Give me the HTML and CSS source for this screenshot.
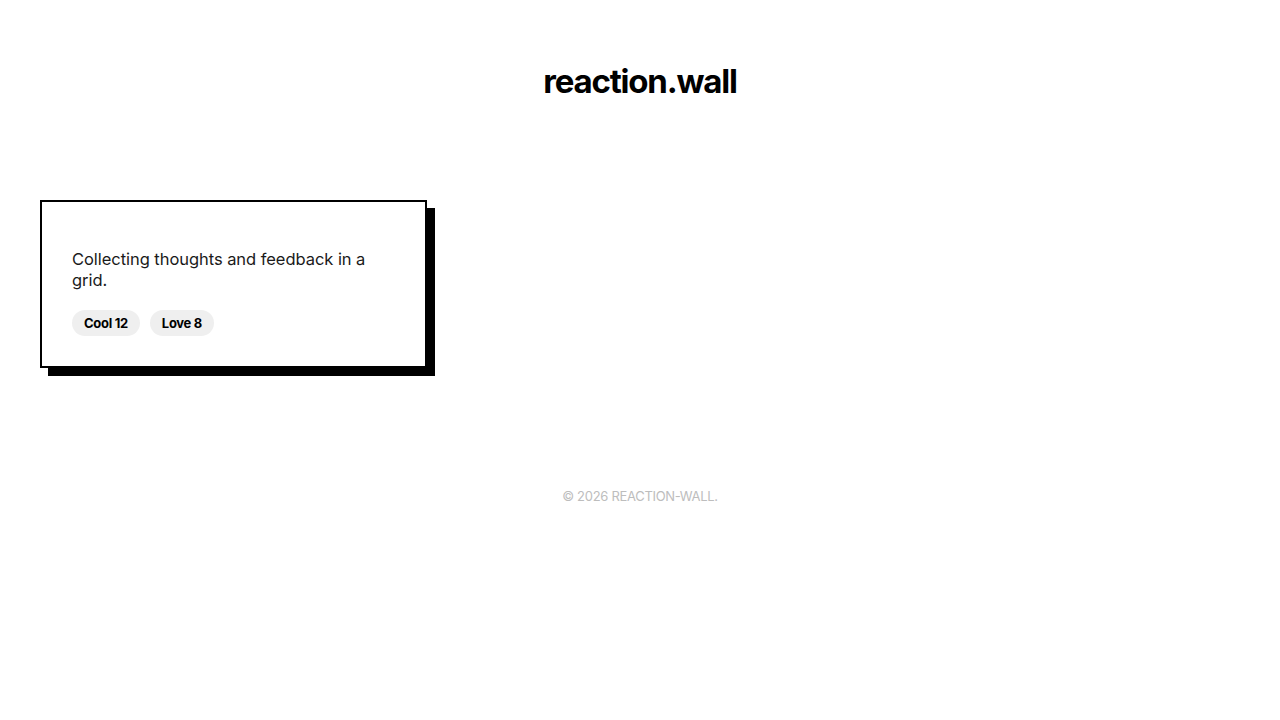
FILE: index.html
```html
<!DOCTYPE html>
<html>
<head>
<meta charset="utf-8">
<link rel="stylesheet" href="styles.css">
</head>
<body>
<header class="header">
  <h1 class="logo">reaction.wall</h1>
</header>
<main class="grid">
  <article class="card">
    <p class="card-text">Collecting thoughts and feedback in a grid.</p>
    <div class="reactions">
      <span class="pill">Cool 12</span>
      <span class="pill">Love 8</span>
    </div>
  </article>
</main>
<footer class="footer">© 2026 REACTION-WALL.</footer>
</body>
</html>
```
FILE: styles.css
```css
* { box-sizing: border-box; }
body {
  margin: 0;
  background: #fff;
  color: #111;
  font-family: "Inter", "Liberation Sans", sans-serif;
}
.header {
  padding: 60px 0 0;
  display: flex;
  justify-content: center;
}
.logo {
  margin: 0;
  font-size: 33px;
  line-height: 42px;
  font-weight: 700;
  letter-spacing: -1.2px;
  color: #000;
}
.grid {
  display: grid;
  grid-template-columns: repeat(3, 1fr);
  gap: 20px;
  padding: 98px 40px 0;
}
.card {
  border: 2px solid #000;
  box-shadow: 8px 8px 0 #000;
  padding: 47px 30px 30px;
  background: #fff;
}
.card-text {
  margin: 0 0 19px;
  font-size: 16.5px;
  line-height: 21px;
  color: #1a1a1a;
  letter-spacing: -0.05px;
}
.reactions {
  display: flex;
  gap: 10px;
}
.pill {
  background: #efefef;
  border-radius: 13px;
  height: 26px;
  padding: 0 12px;
  display: inline-flex;
  align-items: center;
  font-size: 13px;
  font-weight: 700;
  letter-spacing: -0.3px;
  color: #000;
}
.footer {
  margin-top: 120px;
  text-align: center;
  font-size: 13px;
  color: #bdbdbd;
  letter-spacing: -0.3px;
}
```
